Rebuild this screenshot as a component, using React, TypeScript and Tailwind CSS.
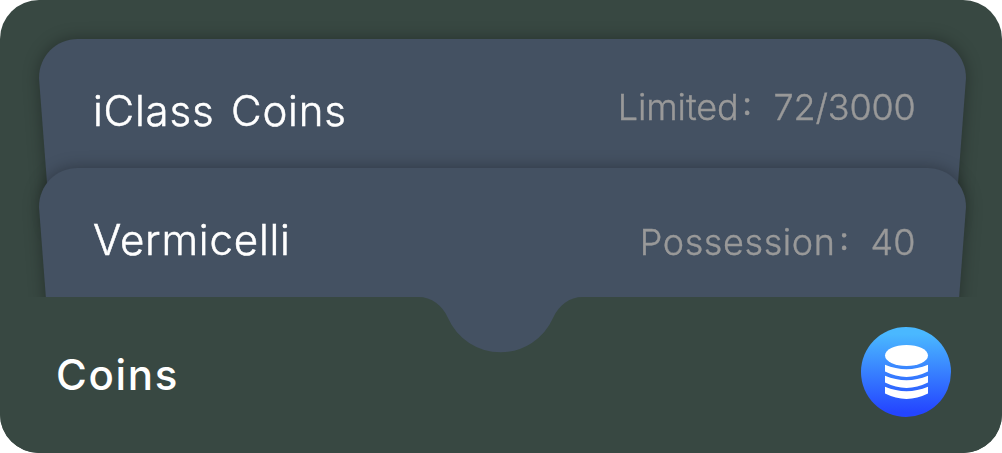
import type { ReactNode } from "react";

function WalletCard({ title, children, className }: { title: ReactNode; children: ReactNode; className: string }) {
  return (
    <section className={`h-[190px] w-[927px] [filter:drop-shadow(0_0_8px_rgba(0,0,0,0.32))] ${className}`}>
      <div className="flex h-full items-start justify-between bg-[#445162] pr-[51px] pl-[54px] [clip-path:path('M39_0H888C910_0_927_17_927_39L915.5_190H11.5L0_39C0_17_17_0_39_0Z')]">
        <h2 className="mt-[47px] text-[42px] leading-[50px] font-light whitespace-pre text-white [-webkit-text-stroke:0.5px_#ffffff]">{title}</h2>
        {children}
      </div>
    </section>
  );
}

function Colon() {
  return <span className="relative -top-[3px] w-[35px] pl-[4px] text-[32px] font-normal">:</span>;
}

function CoinStack() {
  return (
    <svg viewBox="0 0 90 90" className="size-[90px]" aria-hidden="true">
      <defs>
        <linearGradient id="coin-blue" x1="0" y1="0" x2="0" y2="1">
          <stop offset="0.08" stopColor="#4ab8ff" />
          <stop offset="0.95" stopColor="#2445ff" />
        </linearGradient>
      </defs>
      <circle cx="45" cy="45" r="45" fill="url(#coin-blue)" />
      <g fill="#fff">
        <ellipse cx="45.5" cy="28.5" rx="21.5" ry="10.5" />
        <path d="M24 37.8Q45.5 46.6 67 37.8V44.6Q45.5 55.2 24 44.6Z" />
        <path d="M24 48.8Q45.5 57.6 67 48.8V55.6Q45.5 66.2 24 55.6Z" />
        <path d="M24 59.8Q45.5 68.6 67 59.8V66.6Q45.5 77.2 24 66.6Z" />
      </g>
    </svg>
  );
}

export default function App() {
  return (
    <main className="flex h-[453px] w-[1002px] flex-col overflow-hidden rounded-[39px] bg-[#384842] pt-[39px] font-['Inter','Noto_Sans_CJK_SC',sans-serif]">
      <WalletCard title={<span className="tracking-[0.8px] [word-spacing:4px]">iClass Coins</span>} className="ml-[39px] shrink-0">
        <p className="mt-[46px] flex text-[36px] leading-[44px] font-light text-[#999999] [-webkit-text-stroke:0.4px_#999999]">
          <span className="tracking-[-0.1px]">Limited</span>
          <Colon />
          <span className="mr-[-0.5px] tracking-[-0.2px]">72/3000</span>
        </p>
      </WalletCard>
      <WalletCard title={<span className="tracking-[0.8px]">Vermicelli</span>} className="-mt-[61px] ml-[39px] shrink-0">
        <p className="mt-[52px] flex text-[36px] leading-[44px] font-light text-[#999999] [-webkit-text-stroke:0.4px_#999999]">
          <span className="tracking-[0.6px]">Possession</span>
          <Colon />
          <span className="mr-[-0.5px]">40</span>
        </p>
      </WalletCard>
      <footer className="relative -mt-[61px] flex h-[156px] shrink-0 items-start justify-between bg-[#384842] pt-[30px] pr-[51px] pl-[57px] [clip-path:path('M0_0H418C432_0_442_8_448_21A57.4_57.4_0_0_0_553_21C559_8_569_0_583_0H1002V156H0Z')]">
        <h1 className="mt-[23px] -ml-px text-[42px] leading-[50px] font-medium tracking-[1.7px] text-white">Coins</h1>
        <CoinStack />
      </footer>
    </main>
  );
}
